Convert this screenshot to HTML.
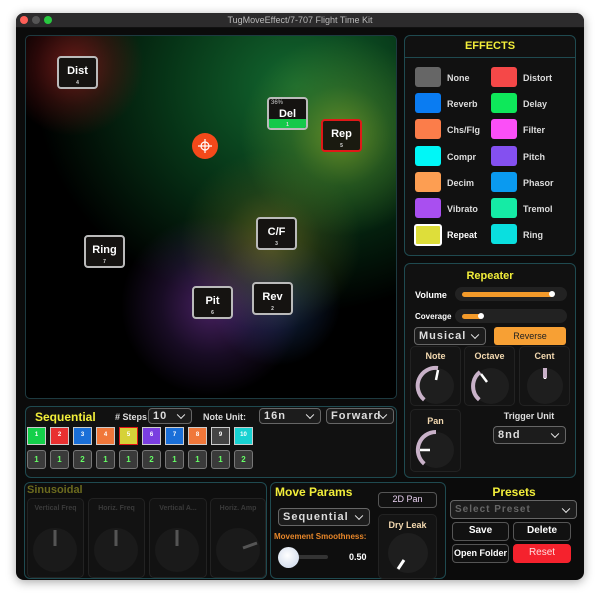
<!DOCTYPE html>
<html><head><meta charset="utf-8"><style>
*{box-sizing:border-box;margin:0;padding:0}
body{width:600px;height:600px;background:#fff;position:relative;overflow:hidden;font-family:"Liberation Sans",sans-serif;}
.a{position:absolute}
.win{left:16px;top:13px;width:568px;height:567px;background:#0b0b0b;border-radius:8px;overflow:hidden;box-shadow:0 2px 10px rgba(0,0,0,.35)}
.tb{left:0;top:0;width:568px;height:15px;background:#2c2b2c;color:#bbb;font-size:9px;text-align:center;line-height:15px;border-bottom:1px solid #111}
.dot{width:8px;height:8px;border-radius:50%;top:3px}
.panel{border:1.5px solid #1f4a50;border-radius:6px;background:#111}
.node{width:41px;height:33px;background:#151311;border:2px solid #bbb;border-radius:4px;color:#fff;font-weight:bold;font-size:11px;text-align:center;line-height:26px}
.node small{position:absolute;left:0;right:0;bottom:1px;font-size:5px;line-height:6px;color:#ddd}
.sw{width:26px;height:20px;border-radius:3px}
.lb{color:#ddd;font-size:9px;font-weight:bold}
.yl{color:#f2ee3a;font-weight:bold}
.dd{border:1.5px solid #666;border-radius:4px;background:#1c1c1c;color:#ddd;font-size:11px;font-weight:bold;letter-spacing:1px;padding-left:4px;display:flex;align-items:center}
.dd:after{content:"";position:absolute;right:7px;top:50%;width:5px;height:5px;border-right:1.5px solid #eee;border-bottom:1.5px solid #eee;transform:translateY(-70%) rotate(45deg)}
.cell{background:#141414;border:1px solid #222;border-radius:5px}
.st{width:19px;height:18px;border:1.5px solid #ccc;font-size:6px;color:#fff;text-align:center;line-height:15px;font-weight:bold}
.st2{width:19px;height:19px;border:1.5px solid #777;background:#3a3a3a;border-radius:3px;color:#6f6;font-size:8px;text-align:center;line-height:17px;font-weight:bold}
.btn{border:1.5px solid #555;border-radius:4px;background:#111;color:#fff;font-size:10px;font-weight:bold;text-align:center;line-height:16px}
</style></head><body>
<div class="a win">
<div class="a tb">TugMoveEffect/7-707 Flight Time Kit</div>
<div class="a dot" style="left:4px;background:#fe5f57"></div>
<div class="a dot" style="left:16px;background:#555"></div>
<div class="a dot" style="left:28px;background:#28c840"></div>
</div>
<!-- pad -->
<div class="a" style="left:25px;top:35px;width:372px;height:364px;border:1px solid #1d3a40;border-radius:5px;overflow:hidden;background:
radial-gradient(circle at 48px 30px,rgba(140,30,30,.75) 0,rgba(100,20,20,.4) 40px,rgba(0,0,0,0) 70px),
radial-gradient(circle at 315px 100px,rgba(130,160,40,.75) 0,rgba(80,130,40,.4) 50px,rgba(0,0,0,0) 100px),
radial-gradient(circle at 245px 205px,rgba(150,130,40,.55) 0,rgba(100,100,30,.25) 50px,rgba(0,0,0,0) 90px),
radial-gradient(circle at 185px 270px,rgba(110,50,150,.65) 0,rgba(80,40,120,.3) 50px,rgba(0,0,0,0) 90px),
radial-gradient(circle at 250px 265px,rgba(40,80,150,.5) 0,rgba(0,0,0,0) 65px),
radial-gradient(ellipse 320px 280px at 270px 50px,rgba(20,110,50,.95) 0,rgba(10,80,35,.65) 130px,rgba(0,0,0,0) 260px),
#000">
</div>
<div class="a node" style="left:57px;top:56px">Dist<small>4</small></div>
<div class="a node" style="left:267px;top:97px;overflow:hidden;line-height:30px">Del<span class="a" style="left:2px;top:-11px;font-size:6px;color:#ccc;font-weight:normal">36%</span><div class="a" style="left:0;right:0;bottom:0;height:9px;background:#14c94a"></div><small style="bottom:0;z-index:2">1</small></div>
<div class="a node" style="left:321px;top:119px;border-color:#e01818;background:#1a1a10">Rep<small>5</small></div>
<div class="a node" style="left:256px;top:217px">C/F<small>3</small></div>
<div class="a node" style="left:84px;top:235px">Ring<small>7</small></div>
<div class="a node" style="left:192px;top:286px">Pit<small>6</small></div>
<div class="a node" style="left:252px;top:282px">Rev<small>2</small></div>
<svg class="a" style="left:191px;top:132px" width="28" height="28"><circle cx="14" cy="14" r="13" fill="#f4491a"/><circle cx="14" cy="14" r="4" fill="none" stroke="#fff" stroke-width="1.2"/><path d="M14 7v14M7 14h14" stroke="#fff" stroke-width="1.2"/></svg>

<!-- effects -->
<div class="a panel" style="left:404px;top:35px;width:172px;height:221px"></div>
<div class="a yl" style="left:404px;top:40px;width:172px;text-align:center;font-size:11px">EFFECTS</div>
<div class="a" style="left:405px;top:57px;width:170px;height:1px;background:#1f4a50"></div>
<div class="a sw" style="left:415px;top:67px;background:#666"></div><div class="a lb" style="left:447px;top:73px">None</div>
<div class="a sw" style="left:415px;top:93px;background:#0a7cf2"></div><div class="a lb" style="left:447px;top:99px">Reverb</div>
<div class="a sw" style="left:415px;top:119px;background:#fb7d4a"></div><div class="a lb" style="left:447px;top:125px">Chs/Flg</div>
<div class="a sw" style="left:415px;top:146px;background:#00f7f7"></div><div class="a lb" style="left:447px;top:152px">Compr</div>
<div class="a sw" style="left:415px;top:172px;background:#fd9e52"></div><div class="a lb" style="left:447px;top:178px">Decim</div>
<div class="a sw" style="left:415px;top:198px;background:#a94ff0"></div><div class="a lb" style="left:447px;top:204px">Vibrato</div>
<div class="a sw" style="left:414px;top:224px;width:28px;height:22px;background:#dede3a;border:2px solid #fff"></div><div class="a lb" style="left:447px;top:230px;color:#fff">Repeat</div>
<div class="a sw" style="left:491px;top:67px;background:#f54848"></div><div class="a lb" style="left:523px;top:73px">Distort</div>
<div class="a sw" style="left:491px;top:93px;background:#0ee85a"></div><div class="a lb" style="left:523px;top:99px">Delay</div>
<div class="a sw" style="left:491px;top:119px;background:#fb4ff7"></div><div class="a lb" style="left:523px;top:125px">Filter</div>
<div class="a sw" style="left:491px;top:146px;background:#8450f0"></div><div class="a lb" style="left:523px;top:152px">Pitch</div>
<div class="a sw" style="left:491px;top:172px;background:#0a9af0"></div><div class="a lb" style="left:523px;top:178px">Phasor</div>
<div class="a sw" style="left:491px;top:198px;background:#15eba5"></div><div class="a lb" style="left:523px;top:204px">Tremol</div>
<div class="a sw" style="left:491px;top:224px;background:#0adfdf"></div><div class="a lb" style="left:523px;top:230px">Ring</div>

<!-- repeater -->
<div class="a panel" style="left:404px;top:263px;width:172px;height:215px"></div>
<div class="a yl" style="left:404px;top:270px;width:172px;text-align:center;font-size:11px">Repeater</div>
<div class="a lb" style="left:415px;top:290px;color:#fff">Volume</div>
<div class="a" style="left:455px;top:287px;width:112px;height:14px;border-radius:7px;background:#222"></div>
<div class="a" style="left:462px;top:292px;width:92px;height:5px;border-radius:3px;background:#f39a2a"></div>
<div class="a" style="left:549px;top:291px;width:6px;height:6px;border-radius:50%;background:#fff"></div>
<div class="a lb" style="left:415px;top:312px;color:#fff;font-size:8px">Coverage</div>
<div class="a" style="left:455px;top:309px;width:112px;height:14px;border-radius:7px;background:#222"></div>
<div class="a" style="left:462px;top:314px;width:20px;height:5px;border-radius:3px;background:#f39a2a"></div>
<div class="a" style="left:478px;top:313px;width:6px;height:6px;border-radius:50%;background:#fff"></div>
<div class="a dd" style="left:414px;top:327px;width:72px;height:18px">Musical</div>
<div class="a" style="left:494px;top:327px;width:72px;height:18px;background:#f7a034;border-radius:3px;color:#222;font-size:9px;text-align:center;line-height:18px">Reverse</div>
<div class="a cell" style="left:410px;top:346px;width:51px;height:60px"></div>
<div class="a cell" style="left:464px;top:346px;width:51px;height:60px"></div>
<div class="a cell" style="left:519px;top:346px;width:51px;height:60px"></div>
<div class="a cell" style="left:410px;top:409px;width:51px;height:63px"></div>
<div class="a" style="left:410px;top:351px;width:51px;text-align:center;font-size:9px;font-weight:bold;color:#f3d9b0">Note</div>
<div class="a" style="left:464px;top:351px;width:51px;text-align:center;font-size:9px;font-weight:bold;color:#f3d9b0">Octave</div>
<div class="a" style="left:519px;top:351px;width:51px;text-align:center;font-size:9px;font-weight:bold;color:#f3d9b0">Cent</div>
<div class="a" style="left:410px;top:416px;width:51px;text-align:center;font-size:9px;font-weight:bold;color:#f3d9b0">Pan</div>
<svg class="a" style="left:410px;top:362px" width="160" height="110">
<g fill="#1e1e1e"><circle cx="26" cy="24" r="18"/><circle cx="81" cy="24" r="18"/><circle cx="135" cy="24" r="18"/><circle cx="26" cy="88" r="18"/></g>
<g fill="none" stroke="#c9b2c9" stroke-width="4">
<path d="M14.3 37.8A18 18 0 0 1 28 6"/>
<path d="M69.3 37.8A18 18 0 0 1 70 10"/>
<path d="M14.3 101.8A18 18 0 0 1 26 70"/>
</g>
<g stroke="#fff" stroke-width="2.5"><path d="M28 8l-2 10"/><path d="M71 12l6 8"/><path d="M135 7v10"/><path d="M10 88h10"/></g>
<path d="M135 6v10" stroke="#c9b2c9" stroke-width="4"/>
</svg>
<div class="a" style="left:489px;top:411px;width:80px;text-align:center;font-size:9px;font-weight:bold;color:#ddd">Trigger Unit</div>
<div class="a dd" style="left:493px;top:426px;width:73px;height:18px">8nd</div>

<!-- sequential -->
<div class="a panel" style="left:25px;top:406px;width:372px;height:72px"></div>
<div class="a yl" style="left:35px;top:410px;font-size:12px">Sequential</div>
<div class="a lb" style="left:115px;top:412px">#&nbsp;Steps</div>
<div class="a dd" style="left:148px;top:408px;width:44px;height:16px">10</div>
<div class="a lb" style="left:203px;top:412px">Note Unit:</div>
<div class="a dd" style="left:259px;top:408px;width:62px;height:16px">16n</div>
<div class="a dd" style="left:326px;top:408px;width:68px;height:16px">Forward</div>
<div class="a st" style="left:27px;top:427px;background:#14d04a">1</div>
<div class="a st" style="left:50px;top:427px;background:#e83030">2</div>
<div class="a st" style="left:73px;top:427px;background:#1a6fd8">3</div>
<div class="a st" style="left:96px;top:427px;background:#f0773a">4</div>
<div class="a st" style="left:119px;top:427px;background:#d6d238;border-color:#e01818">5</div>
<div class="a st" style="left:142px;top:427px;background:#7a3ee0">6</div>
<div class="a st" style="left:165px;top:427px;background:#1a6fd8">7</div>
<div class="a st" style="left:188px;top:427px;background:#f0773a">8</div>
<div class="a st" style="left:211px;top:427px;background:#444">9</div>
<div class="a st" style="left:234px;top:427px;background:#18d2d2">10</div>
<div class="a st2" style="left:27px;top:450px">1</div><div class="a st2" style="left:50px;top:450px">1</div><div class="a st2" style="left:73px;top:450px">2</div><div class="a st2" style="left:96px;top:450px">1</div><div class="a st2" style="left:119px;top:450px">1</div><div class="a st2" style="left:142px;top:450px">2</div><div class="a st2" style="left:165px;top:450px">1</div><div class="a st2" style="left:188px;top:450px">1</div><div class="a st2" style="left:211px;top:450px">1</div><div class="a st2" style="left:234px;top:450px">2</div>

<!-- sinusoidal -->
<div class="a panel" style="left:24px;top:482px;width:243px;height:97px;background:#0e0e0e"></div>
<div class="a" style="left:27px;top:484px;font-size:11px;font-weight:bold;color:#6b6a1e">Sinusoidal</div>
<div class="a cell" style="left:27px;top:498px;width:57px;height:80px;background:#121212"></div>
<div class="a cell" style="left:88px;top:498px;width:57px;height:80px;background:#121212"></div>
<div class="a cell" style="left:149px;top:498px;width:58px;height:80px;background:#121212"></div>
<div class="a cell" style="left:210px;top:498px;width:56px;height:80px;background:#121212"></div>
<div class="a" style="left:27px;top:505px;width:57px;text-align:center;font-size:7px;font-weight:bold;color:#3a3a3a">Vertical Freq</div>
<div class="a" style="left:88px;top:505px;width:57px;text-align:center;font-size:7px;font-weight:bold;color:#3a3a3a">Horiz. Freq</div>
<div class="a" style="left:149px;top:505px;width:58px;text-align:center;font-size:7px;font-weight:bold;color:#3a3a3a">Vertical A...</div>
<div class="a" style="left:210px;top:505px;width:56px;text-align:center;font-size:7px;font-weight:bold;color:#3a3a3a">Horiz. Amp</div>
<svg class="a" style="left:27px;top:520px" width="240" height="60">
<g fill="#1a1a1a"><circle cx="28" cy="30" r="22"/><circle cx="89" cy="30" r="22"/><circle cx="150" cy="30" r="22"/><circle cx="211" cy="30" r="22"/></g>
<g stroke="#555" stroke-width="3"><path d="M28 10v16M89 10v16M150 10v16M216 28l14-5"/></g></svg>

<!-- move params -->
<div class="a panel" style="left:270px;top:482px;width:176px;height:97px;background:#0e0e0e"></div>
<div class="a yl" style="left:275px;top:485px;font-size:12px">Move Params</div>
<div class="a btn" style="left:378px;top:492px;width:59px;height:16px;color:#e8d0f0;font-weight:normal;font-size:9px;line-height:13px">2D Pan</div>
<div class="a dd" style="left:278px;top:508px;width:92px;height:18px">Sequential</div>
<div class="a" style="left:274px;top:532px;font-size:8px;font-weight:bold;color:#e8872a">Movement Smoothness:</div>
<div class="a" style="left:290px;top:555px;width:38px;height:4px;border-radius:2px;background:#333"></div>
<div class="a" style="left:278px;top:547px;width:21px;height:21px;border-radius:50%;background:radial-gradient(circle at 45% 40%,#fff,#c8d4e8)"></div>
<div class="a" style="left:349px;top:552px;font-size:9px;font-weight:bold;color:#fff">0.50</div>
<div class="a cell" style="left:378px;top:514px;width:59px;height:65px"></div>
<div class="a" style="left:378px;top:520px;width:59px;text-align:center;font-size:9px;font-weight:bold;color:#f3d9b0">Dry Leak</div>
<svg class="a" style="left:386px;top:531px" width="44" height="44"><circle cx="22" cy="22" r="20" fill="#1e1e1e"/><path d="M18 29l-6 9" stroke="#fff" stroke-width="3"/></svg>

<!-- presets -->
<div class="a yl" style="left:450px;top:485px;width:128px;text-align:center;font-size:12px">Presets</div>
<div class="a dd" style="left:450px;top:500px;width:127px;height:19px;color:#666;font-size:10px">Select Preset</div>
<div class="a btn" style="left:452px;top:522px;width:57px;height:19px">Save</div>
<div class="a btn" style="left:513px;top:522px;width:58px;height:19px">Delete</div>
<div class="a btn" style="left:452px;top:544px;width:57px;height:19px;font-size:9px">Open Folder</div>
<div class="a btn" style="left:513px;top:544px;width:58px;height:19px;background:#f5222d;border-color:#f5222d;color:#fdd;font-weight:normal">Reset</div>
</body></html>
